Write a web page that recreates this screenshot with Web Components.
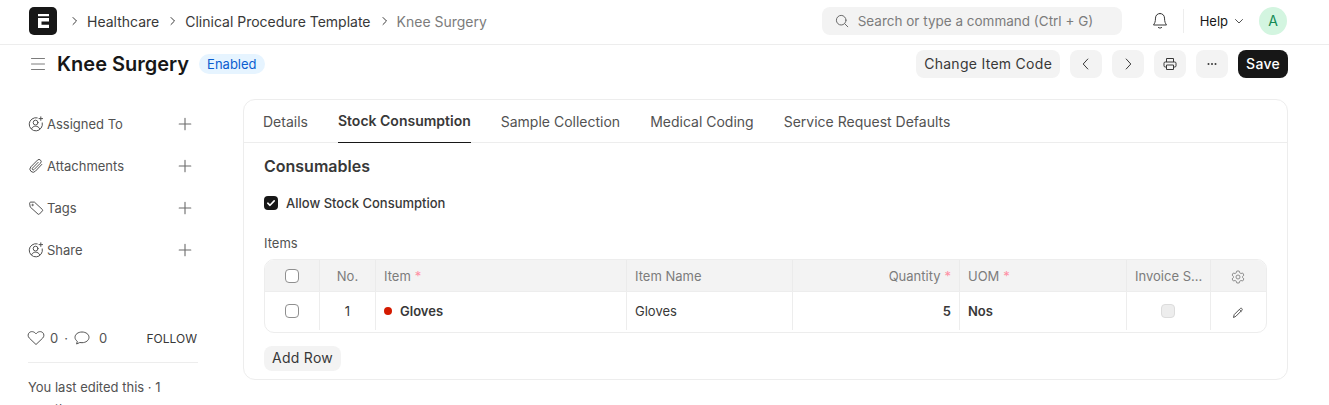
<!DOCTYPE html>
<html>
<head>
<meta charset="utf-8">
<title>Knee Surgery</title>
<style>
    html, body {
        margin: 0;
        height: 405px;
        overflow: hidden;
        background: #ffffff;
        font-family: Inter, "Liberation Sans", sans-serif;
        color: #383838;
    }
</style>
</head>
<body>
<app-navbar></app-navbar>
<page-head></page-head>
<form-layout>
    <form-sidebar slot="side"></form-sidebar>
    <form-card slot="main"></form-card>
</form-layout>

<script>
const plusIcon = `<svg width="16" height="16" viewBox="0 0 16 16" fill="none" stroke="#6b6b6b" stroke-width="1.1" stroke-linecap="round"><path d="M8 2.200v11.600M2.200 8h11.600"/></svg>`;
const userIcon = `<svg width="16" height="16" viewBox="0 0 16 16" fill="none" stroke="#525252" stroke-width="1" stroke-linecap="round"><path d="M9.200 1.800A6.600 6.600 0 1 0 14.300 6.900"/><circle cx="7.600" cy="6.600" r="2.400"/><path d="M3.600 12.600c.8-1.600 2.200-2.400 4-2.400s3.200.8 4 2.400"/><path d="M12.800 .8v3.600M11 2.600h3.600"/></svg>`;
const clipIcon = `<svg width="16" height="16" viewBox="0 0 16 16" fill="none" stroke="#525252" stroke-width="1" stroke-linecap="round" stroke-linejoin="round"><path d="M13.800 6.400 7.400 13.200a3.100 3.100 0 0 1-4.600-4.300l6.700-6.800a2.100 2.100 0 0 1 3 3L6 11.600a1 1 0 0 1-1.500-1.500l5.700-5.800"/></svg>`;
const tagIcon = `<svg width="16" height="16" viewBox="0 0 16 16" fill="none" stroke="#525252" stroke-width="1" stroke-linejoin="round"><path d="M1.600 3.200c0-.6.5-1.100 1.100-1.100h3.700l8 7.400c.4.4.4 1 0 1.400l-3 3.200c-.4.4-1 .4-1.400 0L2.200 7z"/><circle cx="4.600" cy="5" r=".7"/></svg>`;
const crumbArrow = `<svg width="8" height="10" viewBox="0 0 8 10" fill="none" stroke="#383838" stroke-linecap="round" stroke-linejoin="round"><path d="m2 1.500 3.500 3.500L2 8.500"/></svg>`;

const navbarTemplate = document.createElement('template');
navbarTemplate.innerHTML = `
    <style>
        :host {
            display: flex;
            align-items: center;
            box-sizing: border-box;
            height: 45px;
            padding: 0 42px 2px 29px;
            border-bottom: 1px solid #ededed;
            font-size: 14px;
        }
        .logo {
            width: 28px;
            height: 28px;
            margin-right: 14px;
            flex: none;
        }
        .crumbs {
            display: flex;
            align-items: center;
            color: #383838;
            flex: 1;
        }
        .crumbs svg {
            margin-right: 8px;
        }
        .crumbs span {
            margin-right: 10px;
        }
        .crumbs .last {
            color: #7c7c7c;
        }
        .search {
            display: flex;
            align-items: center;
            box-sizing: border-box;
            width: 300px;
            height: 28px;
            padding-left: 13px;
            gap: 9px;
            background: #f3f3f3;
            border-radius: 8px;
            color: #7c7c7c;
            font-size: 13.5px;
            margin-right: 30px;
        }
        .bell {
            display: flex;
            margin-right: 15px;
        }
        .divider {
            width: 1px;
            height: 24px;
            background: #ededed;
            margin-right: 16px;
        }
        .help {
            display: flex;
            align-items: center;
            gap: 6px;
            color: #171717;
            font-size: 13px;
            margin-right: 15px;
        }
        .avatar {
            display: flex;
            align-items: center;
            justify-content: center;
            box-sizing: border-box;
            width: 28px;
            height: 28px;
            padding-bottom: 1px;
            border-radius: 50%;
            background: #d3f5e0;
            color: #138a55;
            font-size: 14px;
        }
    </style>
    <svg class="logo" viewBox="0 0 28 28">
        <rect width="28" height="28" rx="5" fill="#171717"/>
        <path d="M9 7h11v2.200H9zM9 11h11v3.400h-7.500v3.400H20V21H9z" fill="#fff"/>
    </svg>
    <div class="crumbs">
        ${crumbArrow}
        <span>Healthcare</span>
        ${crumbArrow}
        <span>Clinical Procedure Template</span>
        ${crumbArrow}
        <span class="last">Knee Surgery</span>
    </div>
    <div class="search">
        <svg width="14" height="14" viewBox="0 0 14 14" fill="none" stroke="#6b6b6b" stroke-linecap="round"><circle cx="6.200" cy="6.200" r="4.800"/><path d="m9.800 9.800 3 3"/></svg>
        <span>Search or type a command (Ctrl + G)</span>
    </div>
    <div class="bell">
        <svg width="16" height="18" viewBox="0 0 16 18" fill="none" stroke="#383838" stroke-linecap="round" stroke-linejoin="round"><path d="M8 1.500c-2.700 0-4.500 2-4.500 4.600 0 3.800-1 5.400-2 6.900h13c-1-1.500-2-3.100-2-6.900 0-2.600-1.800-4.600-4.500-4.600z"/><path d="M6.300 15.500c.9.800 2.500.800 3.400 0"/></svg>
    </div>
    <div class="divider"></div>
    <div class="help">
        <span>Help</span>
        <svg width="10" height="10" viewBox="0 0 10 10" fill="none" stroke="#525252" stroke-linecap="round" stroke-linejoin="round"><path d="m1.500 3.500 3.500 3.500 3.500-3.500"/></svg>
    </div>
    <div class="avatar">A</div>
`;

class AppNavbar extends HTMLElement {
    constructor() {
        super();
        const shadow = this.attachShadow({mode: 'open'});
        shadow.appendChild(navbarTemplate.content.cloneNode(true));
    }
}

const headTemplate = document.createElement('template');
headTemplate.innerHTML = `
    <style>
        :host {
            display: flex;
            align-items: center;
            box-sizing: border-box;
            height: 38px;
            padding: 0 41px 0 29px;
        }
        .menu {
            display: flex;
            margin-right: 10px;
        }
        h1 {
            margin: 0 10px 0 0;
            font-size: 20px;
            font-weight: 600;
            color: #171717;
        }
        .badge {
            padding: 0 8px;
            height: 20px;
            line-height: 20px;
            border-radius: 10px;
            background: #e6f4ff;
            color: #0b5ed0;
            font-size: 13px;
        }
        .actions {
            display: flex;
            gap: 10px;
            margin-left: auto;
        }
        button {
            display: flex;
            align-items: center;
            justify-content: center;
            box-sizing: border-box;
            height: 28px;
            min-width: 32px;
            padding: 0;
            border: 0;
            border-radius: 8px;
            background: #f3f3f3;
            color: #383838;
            font: 14px Inter, sans-serif;
            letter-spacing: 0.02em;
        }
        .text {
            padding: 0 8px 2px;
        }
        .save {
            padding: 0 8px 2px;
            background: #171717;
            color: #fff;
            font-weight: 500;
        }
    </style>
    <div class="menu">
        <svg width="18" height="16" viewBox="0 0 18 16" stroke="#7c7c7c" stroke-linecap="round"><path d="M2.500 2.500h13M2.500 8h13M2.500 13.500h13"/></svg>
    </div>
    <h1>Knee Surgery</h1>
    <span class="badge">Enabled</span>
    <div class="actions">
        <button class="text">Change Item Code</button>
        <button><svg width="14" height="14" viewBox="0 0 14 14" fill="none" stroke="#383838" stroke-linecap="round" stroke-linejoin="round"><path d="M8.800 2 4.200 7l4.600 5"/></svg></button>
        <button><svg width="14" height="14" viewBox="0 0 14 14" fill="none" stroke="#383838" stroke-linecap="round" stroke-linejoin="round"><path d="m5.200 2 4.600 5-4.600 5"/></svg></button>
        <button><svg width="14" height="14" viewBox="0 0 14 14" fill="none" stroke="#383838" stroke-linejoin="round"><path d="M3.500 5V1.500h7V5"/><rect x="1" y="5" width="12" height="5" rx="1.200"/><rect x="3.500" y="8" width="7" height="4.500" fill="#f3f3f3"/></svg></button>
        <button><svg width="14" height="14" viewBox="0 0 14 14" fill="#383838"><circle cx="3.500" cy="7" r="1"/><circle cx="7" cy="7" r="1"/><circle cx="10.500" cy="7" r="1"/></svg></button>
        <button class="save">Save</button>
    </div>
`;

class PageHead extends HTMLElement {
    constructor() {
        super();
        const shadow = this.attachShadow({mode: 'open'});
        shadow.appendChild(headTemplate.content.cloneNode(true));
    }
}

const layoutTemplate = document.createElement('template');
layoutTemplate.innerHTML = `
    <style>
        :host {
            display: grid;
            grid-template-columns: 171px 1fr;
            column-gap: 44px;
            padding: 16px 41px 0 28px;
        }
    </style>
    <slot name="side"></slot>
    <slot name="main"></slot>
`;

class FormLayout extends HTMLElement {
    constructor() {
        super();
        const shadow = this.attachShadow({mode: 'open'});
        shadow.appendChild(layoutTemplate.content.cloneNode(true));
    }
}

const rowTemplate = document.createElement('template');
rowTemplate.innerHTML = `
    <style>
        :host {
            display: flex;
            align-items: center;
            height: 42px;
            font-size: 13px;
            color: #525252;
        }
        .icon {
            display: flex;
            width: 19px;
            flex: none;
        }
        .label {
            flex: 1;
        }
        .plus {
            display: flex;
            margin-right: 6px;
        }
    </style>
    <span class="icon"></span>
    <span class="label"><slot></slot></span>
    <span class="plus">${plusIcon}</span>
`;

class SidebarRow extends HTMLElement {
    constructor() {
        super();
        const shadow = this.attachShadow({mode: 'open'});
        shadow.appendChild(rowTemplate.content.cloneNode(true));
        const icons = {user: userIcon, clip: clipIcon, tag: tagIcon};
        shadow.querySelector('.icon').innerHTML = icons[this.getAttribute('icon')];
    }
}

const sidebarTemplate = document.createElement('template');
sidebarTemplate.innerHTML = `
    <style>
        :host {
            display: block;
            padding-top: 4px;
            font-size: 13px;
            color: #525252;
        }
        .likes {
            display: flex;
            align-items: center;
            height: 20px;
            margin-top: 57px;
        }
        .likes svg {
            flex: none;
        }
        .follow {
            margin-left: auto;
            margin-right: 2px;
            font-size: 12px;
            color: #383838;
        }
        hr {
            border: 0;
            border-top: 1px solid #ededed;
            margin: 14px 1px 13px 0;
        }
        .edited {
            line-height: 22px;
        }
    </style>
    <sidebar-row icon="user">Assigned To</sidebar-row>
    <sidebar-row icon="clip">Attachments</sidebar-row>
    <sidebar-row icon="tag">Tags</sidebar-row>
    <sidebar-row icon="user">Share</sidebar-row>
    <div class="likes">
        <svg width="18" height="16" viewBox="0 0 18 16" fill="none" stroke="#525252" stroke-linejoin="round" style="margin:0 5px 0 -1px"><path d="M9 14.500 2.400 8.200C.6 6.400.8 3.900 2.300 2.600 4 1.100 6.900 1.200 9 3.800c2.100-2.600 5-2.700 6.700-1.200 1.500 1.300 1.700 3.800-.1 5.600z"/></svg>
        <span>0</span>
        <span style="margin:0 6px">·</span>
        <svg width="16" height="16" viewBox="0 0 16 16" fill="none" stroke="#525252" stroke-linejoin="round"><path d="M8 2C4.100 2 1 4.300 1 7.300c0 1.600.9 3 2.300 4L2.600 14l3.200-1.500c.7.100 1.400.200 2.200.200 3.900 0 7-2.400 7-5.400S11.900 2 8 2z"/></svg>
        <span style="margin-left:9px">0</span>
        <span class="follow">FOLLOW</span>
    </div>
    <hr>
    <div class="edited">You last edited this · 1 month ago</div>
`;

class FormSidebar extends HTMLElement {
    constructor() {
        super();
        const shadow = this.attachShadow({mode: 'open'});
        shadow.appendChild(sidebarTemplate.content.cloneNode(true));
    }
}

const tabsTemplate = document.createElement('template');
tabsTemplate.innerHTML = `
    <style>
        :host {
            display: flex;
            gap: 30px;
            box-sizing: border-box;
            height: 43px;
            padding-left: 19px;
            border-bottom: 1px solid #ededed;
            font-size: 14px;
            color: #525252;
        }
        span {
            box-sizing: border-box;
            height: 43px;
            line-height: 43px;
        }
        .active {
            border-bottom: 1px solid #171717;
            font-weight: 600;
            color: #383838;
            line-height: 42px;
        }
    </style>
    <span>Details</span>
    <span class="active">Stock Consumption</span>
    <span>Sample Collection</span>
    <span>Medical Coding</span>
    <span>Service Request Defaults</span>
`;

class FormTabs extends HTMLElement {
    constructor() {
        super();
        const shadow = this.attachShadow({mode: 'open'});
        shadow.appendChild(tabsTemplate.content.cloneNode(true));
    }
}

const gridColumns = '55px 56px 251px 166px 167px 167px 84px 1fr';

const gridTemplate = document.createElement('template');
gridTemplate.innerHTML = `
    <style>
        :host {
            display: block;
            box-sizing: border-box;
            height: 74px;
            border: 1px solid #ededed;
            border-radius: 10px;
            overflow: hidden;
            font-size: 13px;
            color: #383838;
        }
        .row {
            display: grid;
            grid-template-columns: ${gridColumns};
        }
        .head {
            box-sizing: border-box;
            height: 32px;
            background: #f3f3f3;
            border-bottom: 1px solid #ededed;
            color: #7c7c7c;
        }
        .body {
            height: 38px;
        }
        .cell {
            display: flex;
            align-items: center;
            box-sizing: border-box;
            min-width: 0;
            padding: 0 8px;
            border-right: 1px solid #ededed;
            white-space: nowrap;
        }
        .cell:last-child {
            border-right: 0;
        }
        .center {
            justify-content: center;
            padding: 0;
        }
        .right {
            justify-content: flex-end;
        }
        .head .cell {
            border-right-color: #ebebeb;
        }
        .req::after {
            content: '*';
            color: #ff8fa3;
            margin-left: 4px;
        }
        .box {
            box-sizing: border-box;
            width: 14px;
            height: 14px;
            border: 1px solid #8f8f8f;
            border-radius: 4px;
            background: #fff;
        }
        .box.off {
            background: #ededed;
            border-color: #dcdcdc;
            margin-right: 1px;
        }
        .dot {
            width: 8px;
            height: 8px;
            border-radius: 50%;
            background: #d41a00;
            margin-right: 8px;
        }
        b {
            font-weight: 600;
        }
        .gear {
            margin: 2px 2px 0 0;
        }
        .pencil {
            margin: 4px 2px 0 0;
        }
    </style>
    <div class="row head">
        <div class="cell center"><span class="box"></span></div>
        <div class="cell center">No.</div>
        <div class="cell"><span class="req">Item</span></div>
        <div class="cell">Item Name</div>
        <div class="cell right"><span class="req">Quantity</span></div>
        <div class="cell"><span class="req">UOM</span></div>
        <div class="cell">Invoice S...</div>
        <div class="cell center">
            <svg class="gear" width="14" height="14" viewBox="0 0 14 14" fill="none" stroke="#8f8f8f" stroke-linejoin="round"><path d="M5.800 1h2.400l.4 1.700 1.400.8 1.700-.5 1.200 2.100-1.300 1.200v1.400l1.300 1.200-1.200 2.100-1.700-.5-1.400.8L8.200 13H5.800l-.4-1.700-1.400-.8-1.700.5L1.100 8.900l1.300-1.200V6.300L1.100 5.100l1.200-2.100 1.700.5 1.400-.8z"/><circle cx="7" cy="7" r="2"/></svg>
        </div>
    </div>
    <div class="row body">
        <div class="cell center"><span class="box"></span></div>
        <div class="cell center">1</div>
        <div class="cell"><span class="dot"></span><b>Gloves</b></div>
        <div class="cell">Gloves</div>
        <div class="cell right"><b>5</b></div>
        <div class="cell"><b>Nos</b></div>
        <div class="cell center"><span class="box off"></span></div>
        <div class="cell center">
            <svg class="pencil" width="14" height="14" viewBox="0 0 14 14" fill="none" stroke="#525252" stroke-linejoin="round"><path d="m2.500 11.500.7-2.900 6-6c.5-.5 1.200-.5 1.700 0 .5.500.5 1.200 0 1.700l-6 6z"/><path d="m8.300 3.500 2.200 2.200"/></svg>
        </div>
    </div>
`;

class ItemsGrid extends HTMLElement {
    constructor() {
        super();
        const shadow = this.attachShadow({mode: 'open'});
        shadow.appendChild(gridTemplate.content.cloneNode(true));
    }
}

const cardTemplate = document.createElement('template');
cardTemplate.innerHTML = `
    <style>
        :host {
            display: block;
            box-sizing: border-box;
            height: 281px;
            border: 1px solid #ededed;
            border-radius: 12px;
        }
        .section {
            padding: 13px 20px 0;
        }
        h2 {
            margin: 0;
            font-size: 16px;
            line-height: 20px;
            font-weight: 600;
            color: #383838;
        }
        .check {
            display: flex;
            align-items: center;
            gap: 8px;
            margin-top: 17px;
            height: 20px;
            font-size: 13px;
            font-weight: 500;
            color: #383838;
        }
        .items-label {
            margin: 20px 0 6px;
            line-height: 20px;
            font-size: 13px;
            color: #525252;
        }
        .add {
            display: block;
            height: 25px;
            margin-top: 13px;
            padding: 0 8px 2px;
            border: 0;
            border-radius: 8px;
            background: #f3f3f3;
            color: #383838;
            font: 14px Inter, sans-serif;
            letter-spacing: 0.02em;
        }
    </style>
    <form-tabs></form-tabs>
    <div class="section">
        <h2>Consumables</h2>
        <div class="check">
            <svg width="14" height="14" viewBox="0 0 14 14"><rect width="14" height="14" rx="4" fill="#171717"/><path d="m3.800 7.200 2.200 2.100 4.200-4.400" fill="none" stroke="#fff" stroke-width="1.600" stroke-linecap="round" stroke-linejoin="round"/></svg>
            <span>Allow Stock Consumption</span>
        </div>
        <div class="items-label">Items</div>
        <items-grid></items-grid>
        <button class="add">Add Row</button>
    </div>
`;

class FormCard extends HTMLElement {
    constructor() {
        super();
        const shadow = this.attachShadow({mode: 'open'});
        shadow.appendChild(cardTemplate.content.cloneNode(true));
    }
}

customElements.define('sidebar-row', SidebarRow);
customElements.define('form-sidebar', FormSidebar);
customElements.define('form-tabs', FormTabs);
customElements.define('items-grid', ItemsGrid);
customElements.define('form-card', FormCard);
customElements.define('form-layout', FormLayout);
customElements.define('page-head', PageHead);
customElements.define('app-navbar', AppNavbar);
</script>
</body>
</html>
